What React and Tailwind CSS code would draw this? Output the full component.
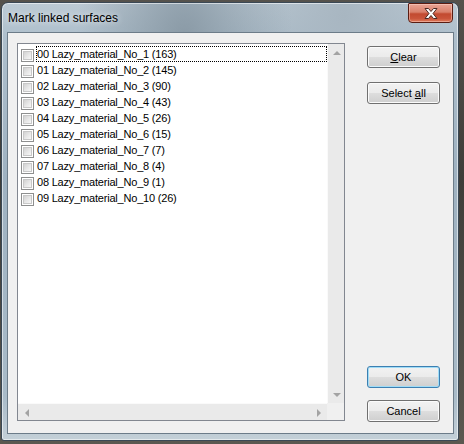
import React from "react";

const items = [
  "00 Lazy_material_No_1 (163)",
  "01 Lazy_material_No_2 (145)",
  "02 Lazy_material_No_3 (90)",
  "03 Lazy_material_No_4 (43)",
  "04 Lazy_material_No_5 (26)",
  "05 Lazy_material_No_6 (15)",
  "06 Lazy_material_No_7 (7)",
  "07 Lazy_material_No_8 (4)",
  "08 Lazy_material_No_9 (1)",
  "09 Lazy_material_No_10 (26)",
];

function Arrow({ dir }) {
  const pts = {
    up: "5,1 1,5 9,5",
    down: "1,1 9,1 5,5",
    left: "1,5 5,1 5,9",
    right: "1,1 5,5 1,9",
  }[dir];
  const vert = dir === "up" || dir === "down";
  return (
    <div className="w-[17px] h-[17px] flex items-center justify-center">
      <svg width={vert ? 10 : 6} height={vert ? 6 : 10} viewBox={vert ? "0 0 10 6" : "0 0 6 10"}>
        <polygon points={pts} fill="#a3a3a3" />
      </svg>
    </div>
  );
}

function CheckBox() {
  return (
    <div className="w-[13px] h-[13px] border border-[#8e8f8f] bg-white p-[1px] shrink-0">
      <div className="w-full h-full bg-[linear-gradient(135deg,#d2d2d2_0%,#e6e6e6_50%,#f7f7f7_100%)] border border-[#c8c8c8]" />
    </div>
  );
}

function Button({ children, isDefault }) {
  return (
    <div
      className={
        "w-[73px] h-[22px] rounded-[3px] border flex items-center justify-center text-[11px] text-black bg-[linear-gradient(to_bottom,#f2f2f2_0%,#ebebeb_48%,#dddddd_52%,#cfcfcf_100%)] " +
        (isDefault
          ? "border-[#3c7fb1] shadow-[inset_0_0_0_1px_#9fdcf7]"
          : "border-[#707070] shadow-[inset_0_0_0_1px_#fbfbfb]")
      }
    >
      <span className="whitespace-pre">{children}</span>
    </div>
  );
}

export default function App() {
  return (
    <div className="w-[464px] h-[444px] overflow-hidden bg-[linear-gradient(180deg,#55524c_0%,#3e3d39_40%,#5b5850_100%)] pt-[2px] pl-[1px] font-['Liberation_Sans',Arial,sans-serif]">
      <div className="w-[458px] h-[439px] flex flex-col rounded-t-[7px] rounded-b-[3px] border border-[#3a4855] bg-[radial-gradient(ellipse_at_40%_8%,#8a9aa6_0%,transparent_28%),radial-gradient(ellipse_at_75%_3%,#a8b6c1_0%,transparent_25%),linear-gradient(180deg,#bccad4_0%,#aebfcc_8%,#9fb2c1_40%,#a9bbc8_90%,#c4d0d8_100%)] shadow-[inset_0_0_0_1px_rgba(255,255,255,0.55)]">
        <div className="h-[29px] flex items-start justify-between pl-[6px] pr-[5px]">
          <span className="mt-[8px] text-[12px] leading-[14px] text-black [text-shadow:0_0_6px_rgba(255,255,255,0.9)]">
            Mark linked surfaces
          </span>
          <div className="w-[45px] h-[20px] rounded-b-[4px] rounded-t-[1px] border border-[#5a1d12] bg-[linear-gradient(to_bottom,#e8a596_0%,#d9806b_45%,#c24a30_55%,#c9543a_80%,#df7c5c_100%)] shadow-[inset_0_0_0_1px_rgba(255,220,210,0.45)] flex items-center justify-center">
            <svg width="16" height="13" viewBox="0 0 16 13">
              <path
                d="M2 1.5 L5.5 1.5 L8 4.5 L10.5 1.5 L14 1.5 L10 6.5 L14 11.5 L10.5 11.5 L8 8.5 L5.5 11.5 L2 11.5 L6 6.5 Z"
                fill="#ffffff"
                stroke="#4a2a24"
                strokeWidth="1"
                strokeLinejoin="round"
              />
            </svg>
          </div>
        </div>
        <div className="ml-[5px] mr-[4px] h-[402px] bg-[#f0f0f0] border border-[#6c7c89] flex items-start pl-[9px] pt-[10px] pr-[13px] gap-[22px]">
          <div className="w-[328px] h-[378px] border border-[#828790] bg-white flex flex-col">
            <div className="flex flex-1 min-h-0">
              <div className="w-[309px] pt-[2px] pl-[3px] flex flex-col">
                {items.map((t, i) => (
                  <div key={t} className="h-[16px] flex items-start">
                    <div className="mt-[3px]">
                      <CheckBox />
                    </div>
                    <div
                      className={
                        "ml-[2px] h-[16px] flex-1 pl-[1px] pt-[1px] text-[11px] leading-[15px] text-black tracking-[-0.2px] whitespace-nowrap " +
                        (i === 0 ? "outline outline-1 outline-dotted outline-black -outline-offset-1" : "")
                      }
                    >
                      {t}
                    </div>
                  </div>
                ))}
              </div>
              <div className="w-[17px] flex flex-col justify-between bg-[#eaeaea] border-l border-[#fafafa]">
                <Arrow dir="up" />
                <Arrow dir="down" />
              </div>
            </div>
            <div className="h-[17px] flex">
              <div className="w-[309px] flex justify-between bg-[#eaeaea] border-t border-[#fafafa]">
                <Arrow dir="left" />
                <Arrow dir="right" />
              </div>
              <div className="w-[17px] bg-[#f0f0f0]" />
            </div>
          </div>
          <div className="w-[73px] h-[376px] mt-[3px] flex flex-col justify-between">
            <div className="flex flex-col gap-[14px]">
              <Button>
                <span className="underline">C</span>lear
              </Button>
              <Button>
                {"Select "}<span className="underline">a</span>ll
              </Button>
            </div>
            <div className="flex flex-col gap-[12px]">
              <Button isDefault>OK</Button>
              <Button>Cancel</Button>
            </div>
          </div>
        </div>
      </div>
    </div>
  );
}
